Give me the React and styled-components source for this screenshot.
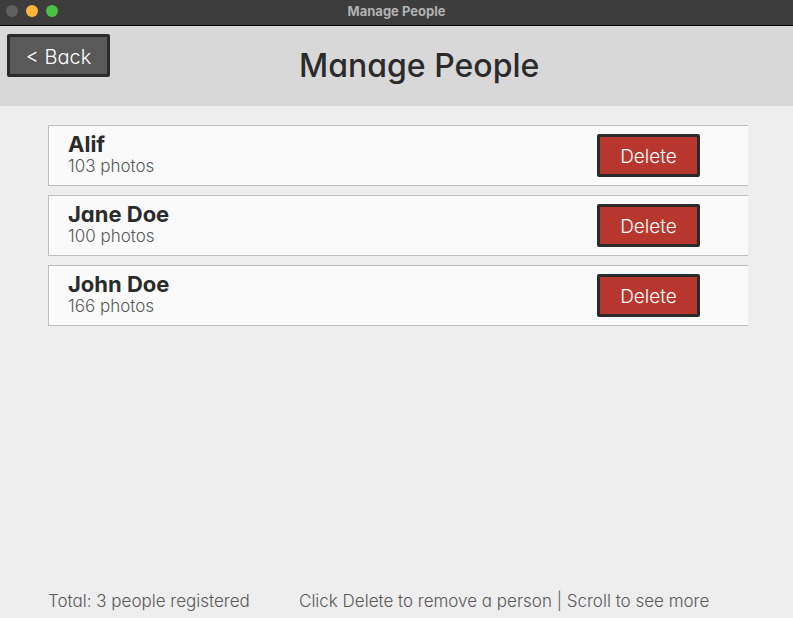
import React from "react";
import styled, { createGlobalStyle } from "styled-components";

const GlobalStyle = createGlobalStyle`
  * { box-sizing: border-box; }
  body {
    margin: 0;
    background: #eeeeee;
    color: #2b2b2b;
    font-family: Inter, "Liberation Sans", sans-serif;
    font-feature-settings: "cv11";
    font-weight: 300;
  }
`;

const Window = styled.div`
  display: flex;
  flex-direction: column;
  min-height: 100vh;
`;

const TitleBar = styled.div`
  display: grid;
  grid-template-columns: 1fr auto 1fr;
  align-items: center;
  height: 26px;
  padding: 0 6px 4px;
  background: #3d3d3d;
  border-bottom: 1px solid #000000;
`;

const Lights = styled.div`
  display: flex;
  gap: 8px;
`;

const Light = styled.span`
  width: 12px;
  height: 12px;
  border-radius: 50%;
  background: ${(p) => p.$color};
`;

const WindowTitle = styled.span`
  font-size: 13px;
  line-height: 16px;
  font-weight: 700;
  font-feature-settings: normal;
  color: #b2b2b2;
`;

const Header = styled.header`
  display: grid;
  grid-template-columns: 292px 1fr;
  align-items: start;
  height: 80px;
  padding: 8px 7px;
  background: #d8d8d8;
`;

const Heading = styled.h1`
  margin: 8px 0 0;
  font-size: 32px;
  line-height: 48px;
  font-weight: 500;
`;

const Button = styled.button`
  width: 103px;
  height: 43px;
  padding: 2px 0 0;
  border: 3px solid #2b2b2b;
  border-radius: 2px;
  background: ${(p) => (p.$danger ? "#b7372f" : "#595959")};
  color: #ffffff;
  font: inherit;
  font-feature-settings: inherit;
  font-size: ${(p) => (p.$danger ? 19 : 20)}px;
  line-height: 24px;
`;

const List = styled.ul`
  flex: 1;
  display: flex;
  flex-direction: column;
  gap: 9px;
  margin: 0;
  padding: 19px 45px 19px 48px;
  list-style: none;
`;

const Row = styled.li`
  display: flex;
  justify-content: space-between;
  align-items: flex-start;
  height: 61px;
  padding: 8px 48px 8px 19px;
  border: 1px solid #bfbfbf;
  border-right: 0;
  background: #fafafa;
`;

const Name = styled.h2`
  margin: 0;
  font-size: 22px;
  line-height: 20px;
  font-weight: 700;
`;

const Count = styled.p`
  margin: 0;
  font-size: 17px;
  line-height: 24px;
  color: #595959;
`;

const Footer = styled.footer`
  display: grid;
  grid-template-columns: 251px 1fr;
  padding: 0 0 6px 48px;
  font-size: 17px;
  line-height: 22px;
  color: #595959;
  white-space: nowrap;
`;

const people = [
  { name: "Alif", photos: 103 },
  { name: "Jane Doe", photos: 100 },
  { name: "John Doe", photos: 166 },
];

export default function App() {
  return (
    <Window>
      <GlobalStyle />
      <TitleBar>
        <Lights>
          <Light $color="#5f5f5f" />
          <Light $color="#fcb53b" />
          <Light $color="#4bbf43" />
        </Lights>
        <WindowTitle>Manage People</WindowTitle>
      </TitleBar>
      <Header>
        <Button type="button">&lt; Back</Button>
        <Heading>Manage People</Heading>
      </Header>
      <List>
        {people.map((person) => (
          <Row key={person.name}>
            <div>
              <Name>{person.name}</Name>
              <Count>{person.photos} photos</Count>
            </div>
            <Button type="button" $danger aria-label={`Delete ${person.name}`}>
              Delete
            </Button>
          </Row>
        ))}
      </List>
      <Footer>
        <span>Total: 3 people registered</span>
        <span>Click Delete to remove a person | Scroll to see more</span>
      </Footer>
    </Window>
  );
}
